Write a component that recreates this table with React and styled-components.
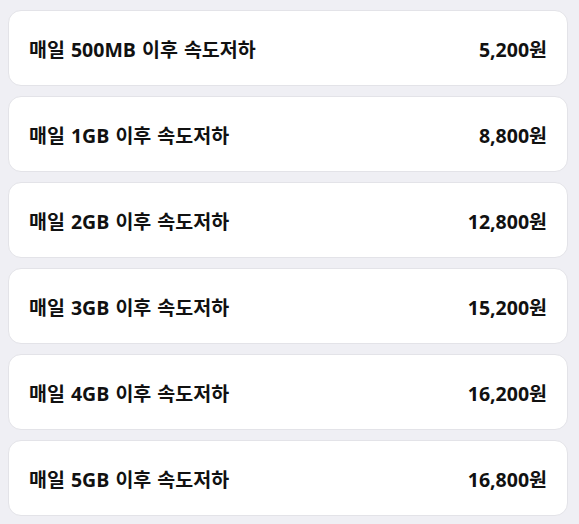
import React from 'react';
import styled, { createGlobalStyle } from 'styled-components';

const GlobalStyle = createGlobalStyle`
  html, body {
    margin: 0;
    padding: 0;
    background: #efeff4;
  }
`;

const List = styled.div`
  display: flex;
  flex-direction: column;
  gap: 10px;
  padding: 10px 11px 8px 8px;
  font-family: "Open Sans", "Noto Sans CJK KR", sans-serif;
`;

const Card = styled.div`
  display: flex;
  align-items: center;
  justify-content: space-between;
  height: 74px;
  padding: 0 20px 0 20px;
  background: #ffffff;
  border: 1px solid #e3e3e8;
  border-radius: 13px;
  color: #111111;
  font-size: 19.5px;
  font-weight: 700;
`;

const Name = styled.span`
  word-spacing: 1px;
`;

const Price = styled.span``;

const plans = [
  { name: '매일 500MB 이후 속도저하', price: '5,200원' },
  { name: '매일 1GB 이후 속도저하', price: '8,800원' },
  { name: '매일 2GB 이후 속도저하', price: '12,800원' },
  { name: '매일 3GB 이후 속도저하', price: '15,200원' },
  { name: '매일 4GB 이후 속도저하', price: '16,200원' },
  { name: '매일 5GB 이후 속도저하', price: '16,800원' },
];

export default function App() {
  return (
    <>
      <GlobalStyle />
      <List>
        {plans.map(plan => (
          <Card key={plan.name}>
            <Name>{plan.name}</Name>
            <Price>{plan.price}</Price>
          </Card>
        ))}
      </List>
    </>
  );
}
